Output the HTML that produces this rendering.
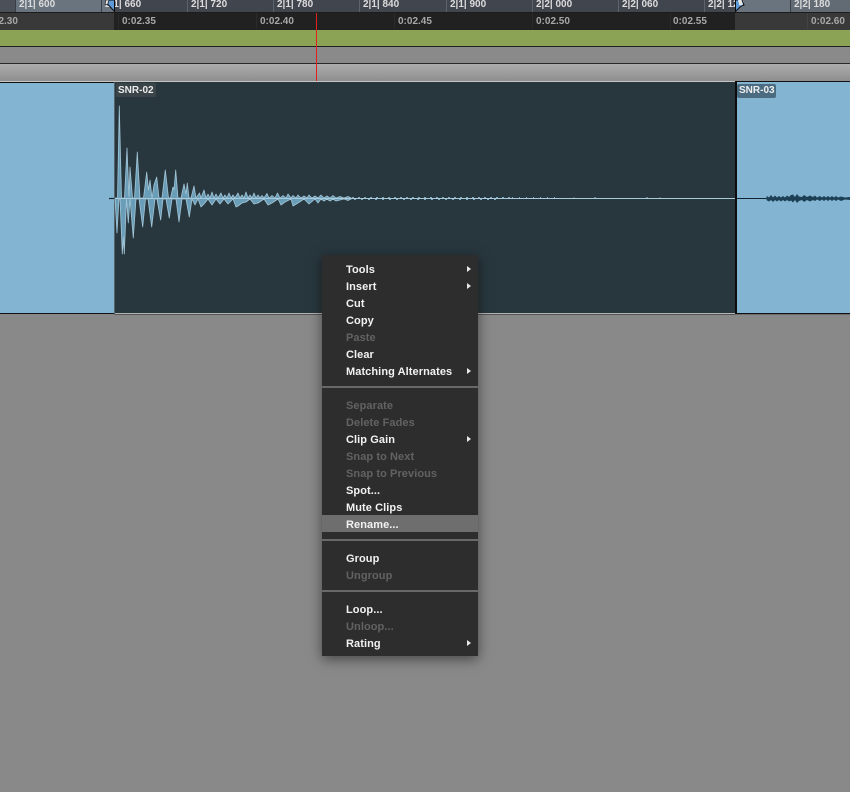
<!DOCTYPE html>
<html>
<head>
<meta charset="utf-8">
<style>
html,body{margin:0;padding:0;background:#898989;}
#p{position:relative;width:850px;height:792px;overflow:hidden;background:#898989;font-family:"Liberation Sans",sans-serif;}
#p div,#p span{position:absolute;}
.r{top:-1px;font:bold 10px/12px "Liberation Sans",sans-serif;color:#dcdcdc;white-space:nowrap;}
.t{top:16px;font:bold 10px/12px "Liberation Sans",sans-serif;color:#a8a8a8;white-space:nowrap;}
.k{top:0;width:1px;height:12px;background:#5c636c;}
.j{top:13px;width:1px;height:16px;background:#2b2b2b;}
.m{left:346px;height:17px;font:bold 11px/17px "Liberation Sans",sans-serif;color:#f2f2f2;white-space:nowrap;letter-spacing:.08px;}
.d{color:#626262;}
.a{left:467px;width:0;height:0;border-left:4px solid #e8e8e8;border-top:3px solid transparent;border-bottom:3px solid transparent;}
.s{left:322px;width:156px;height:2px;background:#686868;}
</style>
</head>
<body>
<div id="p">
<!-- ruler row 1 -->
<div style="left:0;top:0;width:850px;height:12px;background:#40454e"></div>
<div style="left:0;top:0;width:15px;height:12px;background:#4b5059"></div>
<div style="left:15px;top:0;width:99px;height:12px;background:#6a747f"></div>
<div style="left:735px;top:0;width:55px;height:12px;background:#6a747f"></div>
<div style="left:790px;top:0;width:60px;height:12px;background:#626a74"></div>
<div style="left:0;top:12px;width:850px;height:1px;background:#1c1c1c"></div>
<div class="k" style="left:187px"></div><div class="k" style="left:273px"></div><div class="k" style="left:359px"></div><div class="k" style="left:446px"></div><div class="k" style="left:532px"></div><div class="k" style="left:618px"></div><div class="k" style="left:704px"></div>
<div class="k" style="left:15px;background:#3a3f47"></div><div class="k" style="left:101px;background:#3a3f47"></div><div class="k" style="left:790px;background:#3a3f47"></div>
<span class="r" style="left:19px">2|1| 600</span>
<span class="r" style="left:105px">2|1| 660</span>
<span class="r" style="left:191px">2|1| 720</span>
<span class="r" style="left:277px">2|1| 780</span>
<span class="r" style="left:363px">2|1| 840</span>
<span class="r" style="left:450px">2|1| 900</span>
<span class="r" style="left:536px">2|2| 000</span>
<span class="r" style="left:622px">2|2| 060</span>
<span class="r" style="left:708px">2|2| 120</span>
<span class="r" style="left:794px">2|2| 180</span>
<!-- ruler row 2 -->
<div style="left:0;top:13px;width:850px;height:17px;background:#212121"></div>
<div style="left:0;top:13px;width:114px;height:17px;background:#393939"></div>
<div style="left:735px;top:13px;width:115px;height:17px;background:#393939"></div>
<div class="j" style="left:118px"></div><div class="j" style="left:256px"></div><div class="j" style="left:394px"></div><div class="j" style="left:532px"></div><div class="j" style="left:670px"></div><div class="j" style="left:807px;background:#444"></div>
<span class="t" style="left:-16px;clip-path:inset(0 0 0 16px)">0:02.30</span>
<span class="t" style="left:122px">0:02.35</span>
<span class="t" style="left:260px">0:02.40</span>
<span class="t" style="left:398px">0:02.45</span>
<span class="t" style="left:536px">0:02.50</span>
<span class="t" style="left:673px">0:02.55</span>
<span class="t" style="left:811px">0:02.60</span>
<!-- tracks -->
<div style="left:0;top:30px;width:850px;height:16px;background:#8ba354"></div>
<div style="left:0;top:46px;width:850px;height:1px;background:#222"></div>
<div style="left:0;top:47px;width:850px;height:16px;background:#8a8a8a"></div>
<div style="left:0;top:63px;width:850px;height:1px;background:#2a2a2a"></div>
<div style="left:0;top:64px;width:850px;height:17px;background:linear-gradient(#adadad,#8e8e8e)"></div>
<div style="left:0;top:81px;width:850px;height:1px;background:#c4c4c4"></div>
<div style="left:316px;top:13px;width:1px;height:68px;background:#e2201c"></div>
<!-- clips -->
<div style="left:0;top:82px;width:114px;height:231px;background:#83b5d3;border-top:1px solid #111;box-sizing:border-box"></div>
<div style="left:0;top:313px;width:114px;height:1px;background:#111"></div>
<div style="left:114px;top:82px;width:1px;height:233px;background:#55636a"></div>
<div style="left:115px;top:82px;width:620px;height:231px;background:#28373e"></div>
<div style="left:115px;top:313px;width:620px;height:1px;background:#b4b4b4"></div>
<div style="left:115px;top:314px;width:620px;height:1px;background:#555"></div>
<div style="left:735px;top:81px;width:2px;height:233px;background:#0c0c0c"></div>
<div style="left:737px;top:81px;width:113px;height:1px;background:#111"></div>
<div style="left:737px;top:82px;width:113px;height:231px;background:#83b5d3"></div>
<div style="left:735px;top:313px;width:115px;height:1px;background:#111"></div>
<div style="left:735px;top:314px;width:115px;height:1px;background:#6b6b6b"></div>
<svg style="position:absolute;left:0;top:0" width="850" height="320" viewBox="0 0 850 320">
<path d="M109 198.5H115" stroke="#15222a" stroke-width="1.2" fill="none"/>
<path d="M115 198L117.5 198L119.3 106L121.5 198L124.5 198L127 148L129 197L130 167L132.5 198L134.5 198L137.3 152L140 198L143.5 198L146.7 172L148.5 190L150 180L152 198L154 185L156.7 177L159 198L162 198L165.3 170L168.5 198L170.5 198L173 187L174 190L175.7 170L178 198L181 198L184 184L186 194L187.3 183L189 198L191 198L194 186L196 198L199.5 193L201 198L204 190L206 198L208 194L210 198L212 192L214 198L216 194L218 198L221 193L223 198L225 195L227 198L229 193L231 198L233 195L235 198L238 193L240 198L242 195L244 198L246 192L248 198L250 195L252 198L254 193L256 198L258 195L260 198L262 195.5L264 198L267 193.5L269 198L272 195.5L275 198L277.5 193L280 198L283 195.5L286 198L288 194L291 198L293 195.5L296 198L298 195L301 198L304 196L307 198L309 195L312 198L315 196L318 198L321 195L324 198L327 196L330 198L333 195.5L336 198L340 196.5L344 198L348 196.5L352 198.5L348 200.5L344 199L336 201L333 199L330 201L327 199L324 201L321 199L318 203L315 199L309 204L304 199L298 203L293 206L291 199L285 202L281 205L278 199L272 203L268 205L264 199L258 203L254 204L250 199L246 202L242 203L238 206L236 207L233 199L228 204L224 199L220 204L216 199L212 205L208 199L204 204L201 207L198 199L195 205L192 199L189.3 217L186 199L182 199L179 222L176 199L172 199L169.3 218L166 199L163 199L160.7 220L157 199L155 199L151.7 227L148 199L145.5 199L142.7 227L139 199L136 199L133.3 238L130 199L128.3 223L126.5 199L124.3 254L123.3 237L122.3 254L120 199L119 199L117 233L115 199Z" fill="#6a9db7" stroke="#a3c6d8" stroke-width=".8" stroke-linejoin="round"/>
<path d="M115 198.5H735" stroke="#a9cadb" stroke-width="1" fill="none"/>
<path d="M352 197.5H510" stroke="#7fa9bf" stroke-width="1" stroke-dasharray="2 4" fill="none"/>
<path d="M354 199.5H500" stroke="#7fa9bf" stroke-width="1" stroke-dasharray="2 5" fill="none"/>
<path d="M512 197.5H560" stroke="#7fa9bf" stroke-width="1" stroke-dasharray="1 6" fill="none"/>
<path d="M574 198.5V197.5M595 198.5V197M647 198.5V197M660 198.5V197.5" stroke="#a9cadb" stroke-width="1" fill="none"/>
<path d="M737 198.5H767" stroke="#10242f" stroke-width="1" fill="none"/>
<path d="M766 198.5L767 196L769 197.5L771 195L773 197.5L775 195.5L777 197.5L779 196L781 197.5L783 196L785 197.5L787 195.5L789 197L791 195L793 194.5L795 197L797 194L799 196.5L802 197L804 195L807 197L810 195.5L813 197L815 195.5L817 197.5L820 196L822 197.5L824 196L826 197.5L828 196L830 197.5L832 196L834 197.5L836 196L838 197.5L841 196.5L845 197.5L850 197V200L845 199.5L841 201L838 199.5L836 201L834 199.5L832 201L830 199.5L828 201L826 199.5L824 201L822 199.5L820 201L817 199.5L815 201L813 200L810 201.5L807 200L804 202L802 200L799 201L797 203L795 200L793 202.5L791 200.5L789 201.5L787 200L785 201.5L783 200L781 201.5L779 200L777 201.5L775 200L773 202L771 200L769 201.5L767 200.5Z" fill="#1d4055"/>
<!-- markers -->
<path d="M114.5 11.5V0H109L107.5 4Z" fill="#5f9ad8" stroke="#0c0c0c" stroke-width="1"/>
<path d="M109 0H106L105 4L107.5 4.5Z" fill="#e6e6e6" stroke="#0c0c0c" stroke-width=".6"/>
<path d="M735.5 11.5V0H742L744 5L740 7Z" fill="#5f9ad8" stroke="#0c0c0c" stroke-width="1"/>
<path d="M738 0H741.5L743 4.5L739.5 5.5Z" fill="#e6e6e6"/>
</svg>
<div style="left:116px;top:83px;width:40px;height:14px;background:#3b4448;border-radius:1px"></div>
<span style="left:118px;top:85px;font:bold 10px/12px 'Liberation Sans',sans-serif;color:#ececec">SNR-02</span>
<div style="left:737px;top:84px;width:39px;height:14px;background:#4a6b80;border-radius:2px"></div>
<span style="left:739px;top:85px;font:bold 10px/12px 'Liberation Sans',sans-serif;color:#f0f0f0">SNR-03</span>
<!-- menu -->
<div style="left:322px;top:255px;width:156px;height:401px;background:#2d2d2d;box-shadow:0 3px 12px rgba(0,0,0,.5)"></div>
<div style="left:322px;top:515px;width:156px;height:17px;background:#6e6e6e"></div>
<div class="s" style="top:386px"></div>
<div class="s" style="top:539px"></div>
<div class="s" style="top:590px"></div>
<span class="m" style="top:262px">Tools</span><div class="a" style="top:266px"></div>
<span class="m" style="top:279px">Insert</span><div class="a" style="top:283px"></div>
<span class="m" style="top:296px">Cut</span>
<span class="m" style="top:313px">Copy</span>
<span class="m d" style="top:330px">Paste</span>
<span class="m" style="top:347px">Clear</span>
<span class="m" style="top:364px">Matching Alternates</span><div class="a" style="top:368px"></div>
<span class="m d" style="top:398px">Separate</span>
<span class="m d" style="top:415px">Delete Fades</span>
<span class="m" style="top:432px">Clip Gain</span><div class="a" style="top:436px"></div>
<span class="m d" style="top:449px">Snap to Next</span>
<span class="m d" style="top:466px">Snap to Previous</span>
<span class="m" style="top:483px">Spot...</span>
<span class="m" style="top:500px">Mute Clips</span>
<span class="m" style="top:517px">Rename...</span>
<span class="m" style="top:551px">Group</span>
<span class="m d" style="top:568px">Ungroup</span>
<span class="m" style="top:602px">Loop...</span>
<span class="m d" style="top:619px">Unloop...</span>
<span class="m" style="top:636px">Rating</span><div class="a" style="top:640px"></div>
</div>
</body>
</html>
